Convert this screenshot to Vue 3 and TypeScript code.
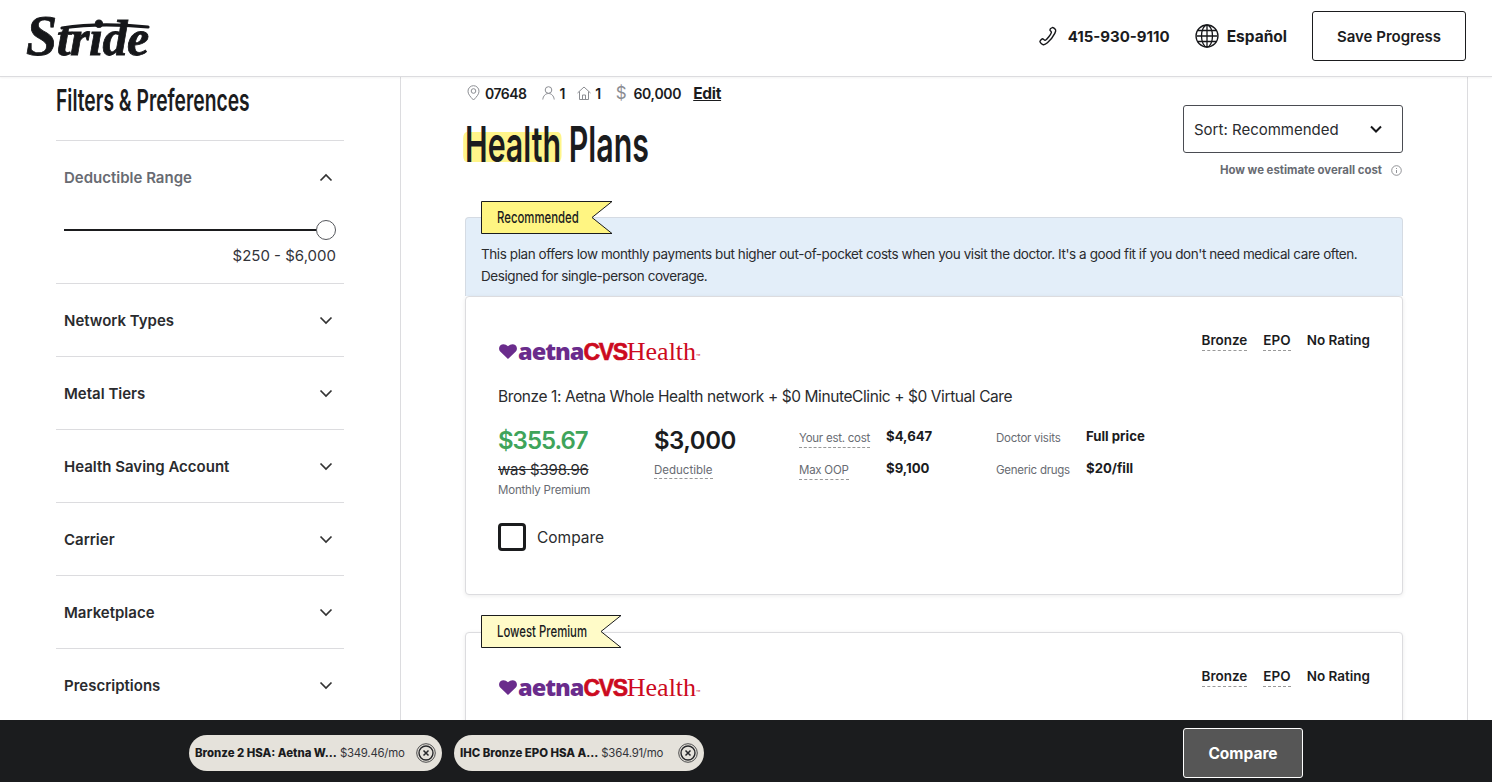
<template>
  <div class="page">
    <header class="topbar">
      <div class="logo">
        <svg class="logo__swash" viewBox="0 0 130 44" width="130" height="44" aria-hidden="true">
          <path d="M36 12 C62 8 92 8 122 11" fill="none" stroke="#16171a" stroke-width="3.200" stroke-linecap="round" />
        </svg>
        <span class="logo__text"><span class="logo__cap">S</span>tride</span>
      </div>
      <div class="topbar__right">
        <a class="topbar__link topbar__link--phone">
          <svg width="20" height="20" viewBox="0 0 20 20" fill="none" stroke="#16171a" stroke-width="1.400" stroke-linejoin="round">
            <path d="M14.200 1.600c.9-.3 2.800 1.100 3.400 2.200.5 1-.1 2.200-.8 3.600-1.500 3-4.200 6.600-7.400 9.400-1.300 1.100-2.800 2.100-4 1.900-1.200-.2-3.500-2.200-3.500-3.100 0-.9 1.700-2.700 2.600-2.800.8 0 1.800 1.600 2.600 1.500 1.800-.5 6-6.300 6.300-8 .1-.8-1.500-1.500-1.500-2.300 0-.7 1.200-2.100 2.300-2.400z" />
          </svg>
          415-930-9110
        </a>
        <a class="topbar__link topbar__link--lang">
          <svg width="24" height="24" viewBox="0 0 24 24" fill="none" stroke="#16171a" stroke-width="1.300">
            <circle cx="12" cy="12" r="11" />
            <ellipse cx="12" cy="12" rx="5.500" ry="11" />
            <path d="M12 1v22M1.500 12h21M3 6.500h18M3 17.500h18" />
          </svg>
          Español
        </a>
        <button class="save-btn">Save Progress</button>
      </div>
    </header>

    <div class="layout">
      <aside class="filters">
        <h2 class="filters__title">Filters &amp; Preferences</h2>
        <section class="filter filter--open">
          <div class="filter__head">
            <span>Deductible Range</span>
            <svg class="chev" width="14" height="9" viewBox="0 0 14 9"><path d="M1.500 7.500 7 2l5.500 5.500" /></svg>
          </div>
          <div class="slider">
            <div class="slider__track"></div>
            <div class="slider__thumb"></div>
          </div>
          <div class="slider__value">$250 - $6,000</div>
        </section>
        <section v-for="f in filterNames" :key="f" class="filter">
          <div class="filter__head">
            <span>{{ f }}</span>
            <svg class="chev" width="14" height="9" viewBox="0 0 14 9"><path d="M1.500 1.500 7 7l5.500-5.500" /></svg>
          </div>
        </section>
      </aside>

      <main class="results">
        <div class="summary">
          <span class="summary__item summary__item--zip">
            <svg width="13" height="16" viewBox="0 0 13 16" fill="none" stroke="#8b8d92" stroke-width="1">
              <path d="M6.500 15C3 11.500 1 9 1 6.200a5.500 5.500 0 0 1 11 0C12 9 10 11.500 6.500 15z" />
              <circle cx="6.500" cy="6" r="2.300" />
            </svg>
            07648
          </span>
          <span class="summary__item summary__item--person">
            <svg width="13" height="14" viewBox="0 0 13 14" fill="none" stroke="#8b8d92" stroke-width="1">
              <circle cx="6.500" cy="4" r="3.300" />
              <path d="M.8 13.500c.3-3.500 2.700-6 5.700-6s5.400 2.500 5.700 6" />
            </svg>
            1
          </span>
          <span class="summary__item summary__item--house">
            <svg width="14" height="14" viewBox="0 0 14 14" fill="none" stroke="#8b8d92" stroke-width="1">
              <path d="M.5 7 7 1l6.500 6M2.500 5.500v8h9v-8M5.500 13.500V9h3v4.500" />
            </svg>
            1
          </span>
          <span class="summary__item summary__item--income">
            <span class="summary__dollar">$</span>
            60,000
          </span>
          <a class="summary__edit">Edit</a>
        </div>

        <div class="results__head">
          <h1 class="results__title"><span class="results__mark">Health</span> Plans</h1>
          <div class="sort">
            <div class="sort__box">
              <span>Sort: Recommended</span>
              <svg width="12" height="8" viewBox="0 0 12 8" fill="none" stroke="#16171a" stroke-width="2"><path d="M1 1.500 6 6.500l5-5" /></svg>
            </div>
            <div class="sort__hint">
              How we estimate overall cost
              <svg width="11" height="11" viewBox="0 0 11 11" fill="none" stroke="#77797e" stroke-width=".8">
                <circle cx="5.500" cy="5.500" r="4.800" />
                <path d="M5.500 5v3M5.500 3v1" />
              </svg>
            </div>
          </div>
        </div>

        <article v-for="plan in plans" :key="plan.badge" class="plan" :class="{ 'plan--blurb': plan.blurb }">
          <div class="ribbon" :class="plan.ribbonClass" :style="{ width: plan.ribbonWidth + 'px' }">
            <svg class="ribbon__shape" :width="plan.ribbonWidth" height="33" :viewBox="`0 0 ${plan.ribbonWidth} 33`">
              <polygon :points="`.5,.5 ${plan.ribbonWidth - 1},.5 ${plan.ribbonWidth - 21},16.500 ${plan.ribbonWidth - 1},32.500 .5,32.500`" />
            </svg>
            <span class="ribbon__label">{{ plan.badge }}</span>
          </div>
          <div v-if="plan.blurb" class="blurb">{{ plan.blurb }}</div>
          <div class="card">
            <div class="card__top">
              <div class="carrier">
                <svg width="18" height="15" viewBox="0 0 18 15"><path fill="#6a2c8c" d="M9 15 1.200 7.600C-.5 5.800-.2 2.800 1.500 1.300 3.300-.4 6.600-.3 9 2.300c2.400-2.600 5.700-2.700 7.500-1 1.700 1.500 2 4.500.3 6.300z" /></svg>
                <span class="carrier__aetna">aetna</span><span class="carrier__cvs">CVS</span><span class="carrier__health">Health</span><span class="carrier__tm">™</span>
              </div>
              <div class="tags">
                <span class="tag tag--dash">Bronze</span>
                <span class="tag tag--dash">EPO</span>
                <span class="tag">No Rating</span>
              </div>
            </div>
            <!-- second card only shows its header above the tray -->
            <template v-if="plan.name">
              <p class="card__name">{{ plan.name }}</p>
              <div class="figures">
                <div class="fig fig--premium">
                  <div class="fig__price">$355.67</div>
                  <div class="fig__was">was $398.96</div>
                  <div class="fig__label">Monthly Premium</div>
                </div>
                <div class="fig fig--deductible">
                  <div class="fig__big">$3,000</div>
                  <div class="fig__label fig__label--dash">Deductible</div>
                </div>
                <dl class="stats">
                  <dt><span class="dash">Your est. cost</span></dt>
                  <dd>$4,647</dd>
                  <dt><span class="dash">Max OOP</span></dt>
                  <dd>$9,100</dd>
                </dl>
                <dl class="stats stats--care">
                  <dt>Doctor visits</dt>
                  <dd>Full price</dd>
                  <dt>Generic drugs</dt>
                  <dd>$20/fill</dd>
                </dl>
              </div>
              <label class="compare">
                <span class="compare__box"></span>
                Compare
              </label>
            </template>
          </div>
        </article>
      </main>
      <div class="gutter"></div>
    </div>

    <footer class="tray">
      <div class="tray__chips">
        <div v-for="c in chips" :key="c.name" class="chip" :style="{ width: c.width + 'px' }">
          <strong class="chip__name">{{ c.name }}</strong>
          <span class="chip__price">{{ c.price }}</span>
          <svg class="chip__x" width="20" height="20" viewBox="0 0 20 20" fill="none" stroke="#26272a">
            <circle cx="10" cy="10" r="9.300" stroke-width=".8" />
            <circle cx="10" cy="10" r="7" stroke-width="1.400" />
            <path d="m7.500 7.500 5 5m0-5-5 5" stroke-width="1.500" />
          </svg>
        </div>
      </div>
      <button class="tray__btn">Compare</button>
    </footer>
  </div>
</template>

<script setup lang="ts">
type Plan = {
  badge: string;
  ribbonWidth: number;
  ribbonClass: string;
  blurb?: string;
  name?: string;
};

const filterNames = [
  'Network Types',
  'Metal Tiers',
  'Health Saving Account',
  'Carrier',
  'Marketplace',
  'Prescriptions',
];

const plans: Plan[] = [
  {
    badge: 'Recommended',
    ribbonWidth: 132,
    ribbonClass: 'ribbon--strong',
    blurb:
      "This plan offers low monthly payments but higher out-of-pocket costs when you visit the doctor. It's a good fit if you don't need medical care often. Designed for single-person coverage.",
    name: 'Bronze 1: Aetna Whole Health network + $0 MinuteClinic + $0 Virtual Care',
  },
  {
    badge: 'Lowest Premium',
    ribbonWidth: 141,
    ribbonClass: 'ribbon--soft',
  },
];

const chips = [
  { name: 'Bronze 2 HSA: Aetna W...', price: '$349.46/mo', width: 253 },
  { name: 'IHC Bronze EPO HSA A...', price: '$364.91/mo', width: 250 },
];
</script>

<style>
html,
body {
  margin: 0;
  height: 100%;
  overflow: hidden;
  background: #fff;
}
</style>

<style scoped>
.page {
  width: 1492px;
  height: 782px;
  display: flex;
  flex-direction: column;
  overflow: hidden;
  font-family: Inter, "Liberation Sans", sans-serif;
  color: #1b1c1e;
}
.topbar {
  flex: none;
  box-sizing: content-box;
  height: 72px;
  display: flex;
  align-items: center;
  justify-content: space-between;
  padding: 0 26px 4px;
  border-bottom: 1px solid #dcdcdf;
  box-shadow: 0 1px 2px rgba(0, 0, 0, 0.05);
  position: relative;
  z-index: 2;
  background: #fff;
}
.logo {
  position: relative;
  width: 126px;
  height: 44px;
}
.logo__swash {
  position: absolute;
  left: 0;
  top: 2px;
}
.logo__text {
  display: block;
  font-family: "Liberation Serif", serif;
  font-style: italic;
  font-weight: 700;
  font-size: 50px;
  line-height: 44px;
  letter-spacing: -0.5px;
  color: #16171a;
  -webkit-text-stroke: 0.8px #16171a;
  white-space: nowrap;
}
.logo__cap {
  font-size: 56px;
}
.topbar__right {
  display: flex;
  align-items: center;
}
.topbar__link {
  display: flex;
  align-items: center;
  font-size: 15px;
  font-weight: 700;
}
.topbar__link--phone {
  gap: 10px;
  margin-right: 25px;
}
.topbar__link--lang {
  gap: 8px;
  margin-right: 25px;
  font-size: 15.500px;
}
.save-btn {
  width: 154px;
  height: 50px;
  background: #fff;
  border: 1px solid #1b1c1e;
  border-radius: 3px;
  font: 600 15px Inter, "Liberation Sans", sans-serif;
  color: #1b1c1e;
}
.layout {
  flex: 1;
  min-height: 0;
  display: flex;
  overflow: hidden;
}
.filters {
  flex: none;
  width: 401px;
  box-sizing: border-box;
  padding: 0 56px;
  border-right: 1px solid #dcdcdf;
}
.filters__title {
  margin: 0;
  height: 63px;
  padding-top: 5px;
  box-sizing: border-box;
  font-size: 30px;
  line-height: 36px;
  font-weight: 600;
  color: #1b1c1e;
  white-space: nowrap;
  transform: scaleX(0.643);
  transform-origin: left center;
}
.filter {
  border-top: 1px solid #dcdcdf;
  padding: 0 8px;
  height: 72px;
}
.filter--open {
  height: 142px;
}
.filter__head {
  height: 72px;
  display: flex;
  align-items: center;
  justify-content: space-between;
  font-size: 15px;
  font-weight: 600;
  color: #2a2b2e;
  padding-right: 3px;
}
.filter--open .filter__head {
  color: #686b72;
}
.chev {
  fill: none;
  stroke: #333;
  stroke-width: 1.700;
}
.slider {
  position: relative;
  height: 2px;
  margin-top: 16px;
  margin-right: 18px;
}
.slider__track {
  height: 2px;
  background: #1b1c1e;
}
.slider__thumb {
  position: absolute;
  right: -18px;
  top: -9px;
  width: 18px;
  height: 18px;
  border: 1px solid #55575c;
  border-radius: 50%;
  background: #fff;
}
.slider__value {
  margin-top: 15px;
  text-align: right;
  font-size: 15px;
  color: #33343a;
}
.results {
  flex: none;
  width: 938px;
  margin-left: 64px;
}
.summary {
  display: flex;
  align-items: center;
  height: 18px;
  margin-top: 7px;
  font-size: 14px;
  font-weight: 600;
  letter-spacing: -0.3px;
}
.summary__item {
  display: flex;
  align-items: center;
  gap: 5px;
}
.summary__item--zip {
  margin-left: 2px;
  gap: 5px;
  margin-right: 15px;
  letter-spacing: -0.5px;
}
.summary__item--person {
  margin-right: 12px;
}
.summary__item--house {
  gap: 4px;
  margin-right: 15px;
}
.summary__item--income {
  gap: 7px;
  margin-right: 12px;
}
.summary__dollar {
  color: #8b8d92;
  font-size: 17px;
  font-weight: 400;
}
.summary__edit {
  font-size: 15.500px;
  font-weight: 700;
  text-decoration: underline;
}
.results__head {
  display: flex;
  justify-content: space-between;
  height: 96px;
  margin-top: 3px;
}
.results__title {
  margin: 13px 0 0;
  height: 52px;
  font-size: 50px;
  line-height: 52px;
  font-weight: 600;
  white-space: nowrap;
  transform: scaleX(0.607);
  transform-origin: left center;
}
.results__mark {
  position: relative;
  z-index: 0;
}
.results__mark::before {
  content: "";
  position: absolute;
  z-index: -1;
  left: -3px;
  right: -1px;
  top: 18px;
  height: 30px;
  background: #fff58a;
  border-radius: 6px;
}
.sort {
  width: 220px;
}
.sort__box {
  height: 48px;
  box-sizing: border-box;
  border: 1px solid #4a4c52;
  border-radius: 3px;
  padding: 0 20px 0 10px;
  display: flex;
  align-items: center;
  justify-content: space-between;
  font-size: 15px;
  color: #2a2b2e;
}
.sort__hint {
  display: flex;
  justify-content: flex-end;
  align-items: center;
  gap: 9px;
  margin-top: 10px;
  padding-right: 1px;
  font-size: 11.400px;
  font-weight: 700;
  color: #686b72;
}
.plan {
  position: relative;
  margin-bottom: 37px;
}
.plan--blurb {
  padding-top: 16px;
}
.ribbon {
  position: absolute;
  left: 16px;
  top: -17px;
  height: 33px;
  z-index: 1;
}
.plan--blurb .ribbon {
  top: 0;
}
.ribbon__shape {
  position: absolute;
  inset: 0;
}
.ribbon__shape polygon {
  stroke: #1b1c1e;
  stroke-width: 1;
}
.ribbon--strong polygon {
  fill: #fff582;
}
.ribbon--soft polygon {
  fill: #fffbc8;
}
.ribbon__label {
  position: absolute;
  left: 16px;
  top: 0;
  line-height: 33px;
  font-size: 16px;
  font-weight: 500;
  white-space: nowrap;
  color: #1b1c1e;
  transform: scaleX(0.71);
  transform-origin: left center;
}
.blurb {
  box-sizing: border-box;
  height: 79px;
  padding: 25px 15px 0;
  background: #e3eef9;
  border: 1px solid #d5dbe3;
  border-bottom: 0;
  border-radius: 4px 4px 0 0;
  font-size: 13.500px;
  letter-spacing: -0.42px;
  line-height: 22px;
  color: #2a2b2e;
}
.card {
  box-sizing: border-box;
  height: 299px;
  padding: 0 32px;
  border: 1px solid #dcdcdf;
  border-radius: 4px;
  box-shadow: 0 1px 4px rgba(0, 0, 0, 0.08);
  background: #fff;
}
.card__top {
  display: flex;
  justify-content: space-between;
  padding-top: 34px;
  height: 90px;
  box-sizing: border-box;
}
.carrier {
  display: flex;
  align-items: baseline;
  height: 30px;
  margin-top: 5px;
  line-height: 30px;
  white-space: nowrap;
}
.carrier svg {
  align-self: center;
  margin: 1px 1px 0 1px;
}
.carrier__aetna {
  font: 800 23.500px/30px "Open Sans", sans-serif;
  color: #6a2c8c;
  letter-spacing: -1px;
}
.carrier__cvs {
  font: 700 23px/30px "Liberation Sans", sans-serif;
  color: #cc0a20;
  letter-spacing: -1.300px;
  -webkit-text-stroke: 0.6px #cc0a20;
}
.carrier__health {
  font: 400 26px/30px "Liberation Serif", serif;
  color: #cc0a20;
}
.carrier__tm {
  font-size: 7px;
  color: #cc0a20;
}
.tags {
  display: flex;
  gap: 16px;
  height: 20px;
}
.tag {
  font-size: 13.500px;
  font-weight: 600;
  line-height: 19px;
  color: #1b1c1e;
  letter-spacing: 0;
}
.tag--dash {
  border-bottom: 1px dashed #999;
}
.card__name {
  margin: 0;
  font-size: 15.500px;
  letter-spacing: -0.41px;
  line-height: 20px;
  color: #2a2b2e;
}
.figures {
  display: flex;
  margin-top: 20px;
  height: 96px;
}
.fig--premium {
  width: 156px;
}
.fig--deductible {
  width: 145px;
}
.fig__price {
  font-size: 24px;
  line-height: 28px;
  font-weight: 600;
  letter-spacing: -1px;
  color: #3fa45b;
}
.fig__big {
  font-size: 24px;
  line-height: 28px;
  font-weight: 600;
  letter-spacing: -0.5px;
  color: #1b1c1e;
}
.fig__was {
  font-size: 15px;
  letter-spacing: -0.2px;
  line-height: 22px;
  margin-top: 4px;
  text-decoration: line-through;
  color: #2a2b2e;
}
.fig__label {
  font-size: 11.500px;
  letter-spacing: -0.2px;
  line-height: 16px;
  margin-top: 1px;
  color: #686b72;
}
.fig__label--dash {
  display: inline-block;
  margin-top: 7px;
  border-bottom: 1px dashed #999;
  letter-spacing: 0;
}
.stats {
  margin: 0;
  display: grid;
  grid-template-columns: 87px 110px;
  grid-auto-rows: 32px;
  align-content: start;
  font-size: 11.500px;
  letter-spacing: -0.25px;
}
.stats--care {
  grid-template-columns: 90px 120px;
}
.stats dt {
  color: #686b72;
  padding-top: 4px;
}
.stats dd {
  margin: 0;
  padding-top: 1px;
  font-size: 13.200px;
  font-weight: 700;
  letter-spacing: 0;
  color: #1b1c1e;
}
.dash {
  display: inline-block;
  padding-bottom: 2px;
  border-bottom: 1px dashed #999;
}
.compare {
  display: flex;
  align-items: center;
  gap: 11px;
  font-size: 15.500px;
  color: #2a2b2e;
}
.compare__box {
  width: 28px;
  height: 28px;
  box-sizing: border-box;
  border: 3px solid #1b1c1e;
  border-radius: 4px;
}
.gutter {
  flex: none;
  width: 1px;
  margin-left: 64px;
  background: #dcdcdf;
}
.tray {
  flex: none;
  box-sizing: border-box;
  height: 62px;
  background: #1b1c1e;
  position: relative;
  z-index: 2;
  display: flex;
  align-items: center;
  padding: 4px 0 0 189px;
}
.tray__chips {
  display: flex;
  gap: 12px;
  width: 994px;
}
.chip {
  box-sizing: border-box;
  height: 36px;
  display: flex;
  align-items: center;
  padding: 0 5px 0 6px;
  background: #e5e2db;
  border-radius: 18px;
  font-size: 11.400px;
  white-space: nowrap;
}
.chip__name {
  font-weight: 800;
  color: #1b1c1e;
}
.chip__price {
  margin-left: 3px;
  letter-spacing: -0.25px;
  color: #33343a;
}
.chip__x {
  flex: none;
  margin-left: auto;
  margin-right: 1px;
}
.tray__btn {
  width: 120px;
  height: 50px;
  background: #565656;
  border: 1px solid #fff;
  border-radius: 3px;
  color: #fff;
  font: 700 15.500px Inter, "Liberation Sans", sans-serif;
}
</style>
